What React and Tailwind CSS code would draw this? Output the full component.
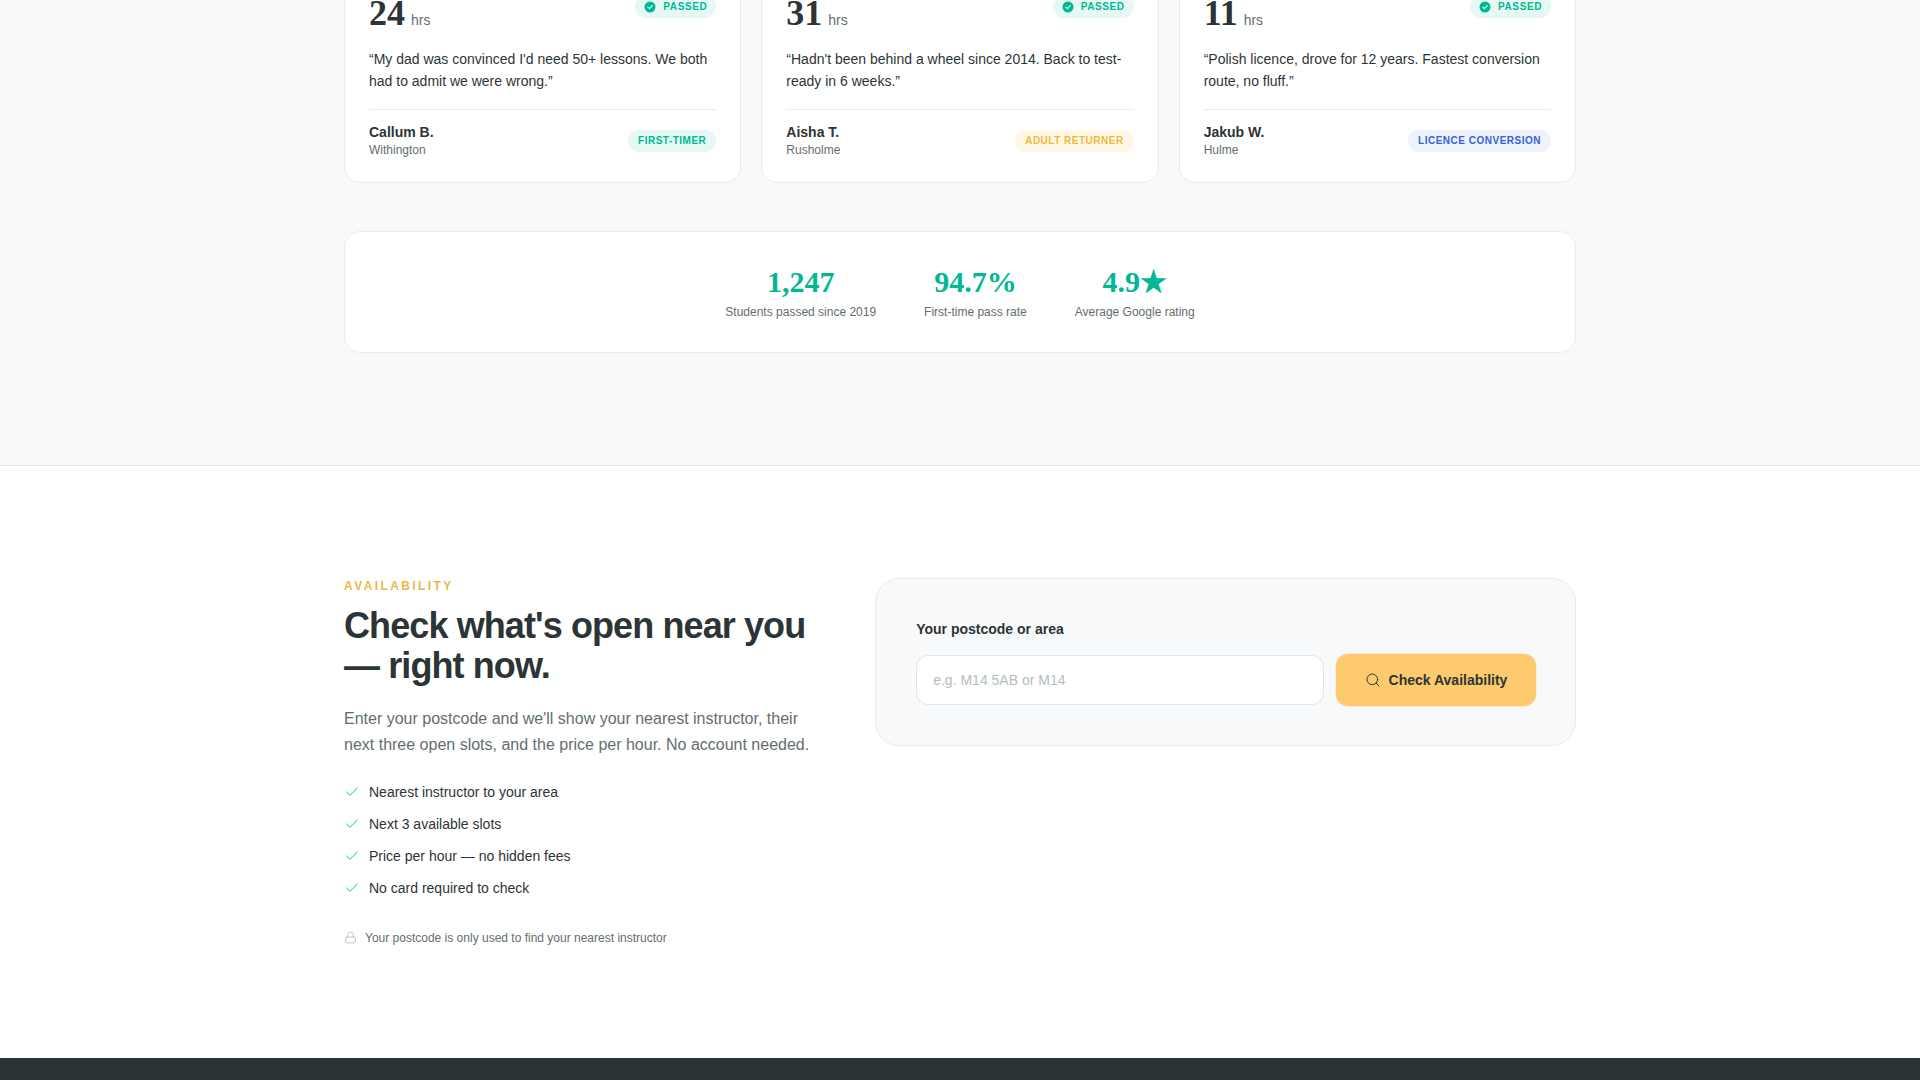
import React from 'react';
import { Check, Lock, Search } from 'lucide-react';

const stories = [
    {
        hours: '24',
        quote: '“My dad was convinced I\'d need 50+ lessons. We both had to admit we were wrong.”',
        name: 'Callum B.',
        area: 'Withington',
        tag: 'FIRST-TIMER',
        tagClass: 'bg-[#e6f8f4] text-[#00b894]',
    },
    {
        hours: '31',
        quote: '“Hadn\'t been behind a wheel since 2014. Back to test-ready in 6 weeks.”',
        name: 'Aisha T.',
        area: 'Rusholme',
        tag: 'ADULT RETURNER',
        tagClass: 'bg-[#fff7e6] text-[#f0b73f]',
    },
    {
        hours: '11',
        quote: '“Polish licence, drove for 12 years. Fastest conversion route, no fluff.”',
        name: 'Jakub W.',
        area: 'Hulme',
        tag: 'LICENCE CONVERSION',
        tagClass: 'bg-[#edf2fd] text-[#3563d9]',
    },
];

const stats = [
    { value: '1,247', label: 'Students passed since 2019' },
    { value: '94.7%', label: 'First-time pass rate' },
    { value: '4.9★', label: 'Average Google rating' },
];

const perks = [
    'Nearest instructor to your area',
    'Next 3 available slots',
    'Price per hour — no hidden fees',
    'No card required to check',
];

const PassedIcon = () => (
    <svg width="12" height="12" viewBox="0 0 12 12" fill="none">
        <circle cx="6" cy="6" r="5.5" fill="#00b894" />
        <path d="M3.8 6.1l1.6 1.5 2.8-3" stroke="#e6f8f4" strokeWidth="1.2" strokeLinecap="round" strokeLinejoin="round" />
    </svg>
);

const StoryCard = ({ story }) => (
    <div className="rounded-2xl border border-[#e9ecef] bg-white p-6">
        <div className="flex items-start justify-between">
            <div className="flex items-baseline gap-1.5 pt-[2px]">
                <span className="font-['Liberation_Serif',serif] text-4xl leading-[1.1] font-bold text-[#2d3436]">{story.hours}</span>
                <span className="text-sm text-[#636e72]">hrs</span>
            </div>
            <span className="mt-[3px] flex h-[23px] items-center gap-[7px] rounded-full bg-[#e6f8f4] px-[9px] text-[10px] font-bold tracking-[0.06em] text-[#00b894]">
                <PassedIcon />
                PASSED
            </span>
        </div>
        <p className="mt-[14px] text-sm leading-[22px] text-[#2d3436]">{story.quote}</p>
        <div className="mt-[17px] flex items-center justify-between border-t border-[#e9ecef] pt-[13px]">
            <div>
                <div className="text-sm leading-[18px] font-bold text-[#2d3436]">{story.name}</div>
                <div className="mt-px text-xs leading-[16px] text-[#636e72]">{story.area}</div>
            </div>
            <span className={`mt-[2px] rounded-full px-[10px] py-[5px] text-[10px] leading-3 font-bold tracking-[0.05em] ${story.tagClass}`}>
                {story.tag}
            </span>
        </div>
    </div>
);

export default function App() {
    return (
        <div className="flex h-screen flex-col overflow-hidden bg-white font-['Liberation_Sans',Arial,sans-serif] text-[#2d3436]">
            <section className="-mt-[33px] border-b border-[#dfe6e9] bg-[#f8f9fa] pb-[112px]">
                <div className="mx-auto w-[1232px]">
                    <div className="grid grid-cols-3 gap-5">
                        {stories.map((story) => (
                            <StoryCard key={story.name} story={story} />
                        ))}
                    </div>
                    <div className="mt-12 flex justify-center gap-12 rounded-2xl border border-[#e9ecef] bg-white pt-8 pb-[31px]">
                        {stats.map((stat) => (
                            <div key={stat.label} className="text-center">
                                <div className="font-['Liberation_Serif',serif] text-[30px] leading-[36px] font-bold text-[#00b894]">{stat.value}</div>
                                <div className="mt-[3px] text-xs leading-[18px] text-[#636e72]">{stat.label}</div>
                            </div>
                        ))}
                    </div>
                </div>
            </section>

            <section className="pt-28 pb-[112px]">
                <div className="mx-auto grid w-[1232px] grid-cols-[2fr_3fr] items-start gap-16">
                    <div>
                        <div className="text-xs leading-4 font-bold tracking-[0.2em] text-[#e9b949]">AVAILABILITY</div>
                        <h2 className="mt-3 text-4xl leading-10 font-bold tracking-[-0.025em] text-[#2d3436]">
                            Check what's open near you — right now.
                        </h2>
                        <p className="mt-5 text-base leading-[26px] text-[#636e72]">
                            Enter your postcode and we'll show your nearest instructor, their next three open slots, and the price per hour. No account needed.
                        </p>
                        <ul className="mt-6 flex flex-col gap-3">
                            {perks.map((perk) => (
                                <li key={perk} className="flex items-center gap-[9px] text-sm leading-5 text-[#2d3436]">
                                    <Check size={16} strokeWidth={1.4} className="mt-px text-[#00b894]" />
                                    {perk}
                                </li>
                            ))}
                        </ul>
                        <div className="mt-8 flex items-center gap-2 text-xs leading-4 text-[#636e72]">
                            <Lock size={13} strokeWidth={1.5} className="text-[#b2bec3]" />
                            Your postcode is only used to find your nearest instructor
                        </div>
                    </div>
                    <div className="rounded-3xl border border-[#e9ecef] bg-[#f8f9fa] p-10">
                        <label className="block text-sm leading-5 font-bold text-[#2d3436]">Your postcode or area</label>
                        <div className="mt-4 flex gap-3">
                            <input
                                type="text"
                                placeholder="e.g. M14 5AB or M14"
                                className="h-[50px] flex-1 rounded-xl border border-[#dfe6e9] bg-white px-4 text-sm outline-none placeholder:text-[#b2bec3]"
                            />
                            <button className="-my-px -mr-px flex h-[52px] w-[200px] items-center justify-center gap-2 rounded-xl bg-[#fdcb6e] text-sm font-bold text-[#2d3436] shadow-[0_0_0_1px_rgba(253,203,110,0.25)]">
                                <Search size={16} strokeWidth={1.5} />
                                Check Availability
                            </button>
                        </div>
                    </div>
                </div>
            </section>

            <footer className="h-40 shrink-0 bg-[#2d3436]" />
        </div>
    );
}
